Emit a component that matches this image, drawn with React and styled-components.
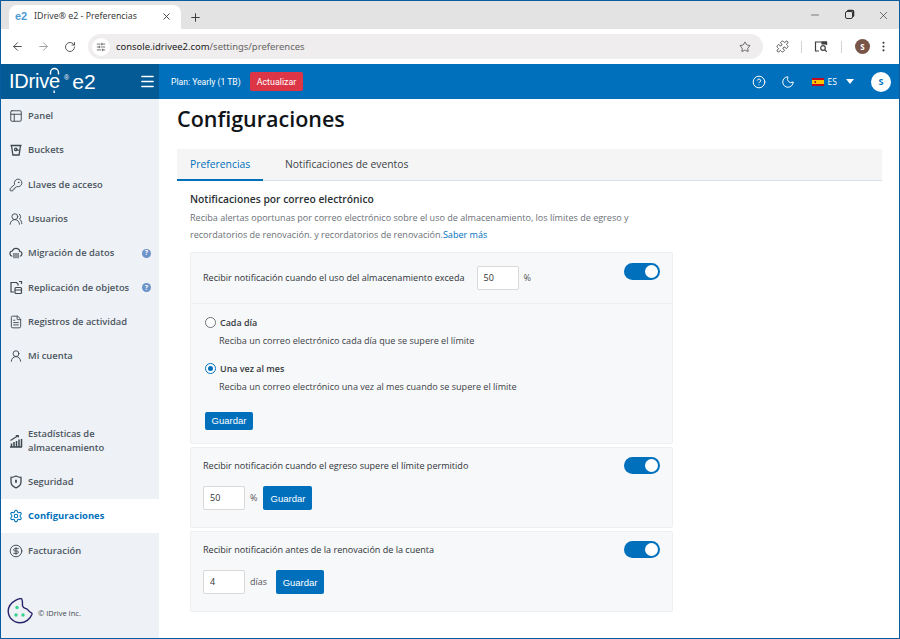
import React from 'react'
import styled, { createGlobalStyle } from 'styled-components'
import {
  ArrowLeft,
  ArrowRight,
  RotateCw,
  Plus,
  X,
  Minus,
  Star,
  Puzzle,
  EllipsisVertical,
  SlidersHorizontal,
  Menu,
  CircleHelp,
  Moon,
  Settings,
  CircleDollarSign,
  KeyRound,
  UsersRound,
  FileText,
  UserRound,
  PanelsTopLeft,
} from 'lucide-react'

const GlobalStyle = createGlobalStyle`
  html, body {
    margin: 0;
    padding: 0;
    background: #fff;
    overflow: hidden;
  }
  * { box-sizing: border-box; }
`

const Frame = styled.div`
  width: 900px;
  height: 639px;
  border: 1px solid #0b5c9e;
  display: flex;
  flex-direction: column;
  overflow: hidden;
  font-family: 'Open Sans', sans-serif;
  background: #fff;
`

const TabStrip = styled.div`
  height: 28px;
  flex: none;
  background: #e3e3e3;
  display: flex;
  align-items: flex-end;
  padding-left: 8px;
`

const BrowserTab = styled.div`
  width: 172px;
  height: 24px;
  background: #fff;
  border-radius: 8px 8px 0 0;
  display: flex;
  align-items: center;
  padding: 0 9px 2px 6px;
  font-family: 'Noto Sans', sans-serif;
  font-size: 8.8px;
  color: #3c3c3c;
`

const Favicon = styled.span`
  font-family: 'Liberation Sans', sans-serif;
  font-size: 11px;
  font-weight: 700;
  color: #4d9ad6;
  width: 19px;
`

const TabTitle = styled.span`
  flex: 1;
  white-space: nowrap;
`

const NewTab = styled.div`
  margin-left: 8px;
  height: 24px;
  display: flex;
  align-items: center;
  color: #3a3a3a;
`

const WindowButtons = styled.div`
  margin-left: auto;
  height: 28px;
  display: flex;
  align-items: center;
  gap: 24px;
  padding-right: 9px;
  color: #333;
`

const RestoreIcon = styled.span`
  width: 8px;
  height: 8px;
  border: 1.2px solid #333;
  border-radius: 2px;
  box-shadow: 1.5px -1.5px 0 -0.2px #333;
`

const Toolbar = styled.div`
  height: 35px;
  flex: none;
  background: #fff;
  display: flex;
  align-items: center;
  padding: 0 7px 0 9px;
  color: #444;
`

const NavGlyph = styled.span`
  width: 14px;
  display: flex;
  justify-content: center;
  margin-right: ${({ $gap }) => $gap}px;
  color: ${({ $muted }) => ($muted ? '#9a9a9a' : '#3f3f3f')};
`

const UrlBar = styled.div`
  width: 675px;
  height: 25px;
  flex: none;
  margin-left: 11px;
  border-radius: 13px;
  background: #efeded;
  display: flex;
  align-items: center;
  padding: 0 12px 0 4px;
`

const SiteChip = styled.span`
  width: 18px;
  height: 18px;
  border-radius: 50%;
  background: #fff;
  display: flex;
  align-items: center;
  justify-content: center;
  color: #333;
  margin-right: 6px;
`

const Url = styled.span`
  flex: 1;
  font-family: 'Noto Sans', sans-serif;
  font-size: 9.45px;
  color: #222;
  & span { color: #666; }
`

const ToolIcons = styled.div`
  flex: 1;
  display: flex;
  align-items: center;
  padding-left: 13px;
  color: #3f3f3f;
`

const Divider = styled.span`
  width: 1px;
  height: 12px;
  background: #d5d5d5;
  margin: 0 ${({ $space }) => $space}px;
`

const ProfileDot = styled.span`
  width: 15px;
  height: 15px;
  border-radius: 50%;
  background: #795548;
  color: #fff;
  font-size: 8px;
  font-weight: 700;
  display: flex;
  align-items: center;
  justify-content: center;
  margin-right: 7px;
`

const AppHeader = styled.header`
  height: 35px;
  flex: none;
  background: #0070bc;
  display: flex;
  align-items: center;
  color: #fff;
`

const LogoBlock = styled.div`
  width: 158px;
  height: 100%;
  background: #045a94;
  display: flex;
  align-items: center;
  padding: 0 3px 0 8px;
`

const LogoText = styled.span`
  font-family: 'Liberation Sans', sans-serif;
  font-size: 20px;
  letter-spacing: -0.2px;
  display: flex;
  align-items: center;
`

const LogoMark = styled.span`
  font-size: 7px;
  margin: -9px 3px 0 4px;
  font-family: 'Liberation Sans', sans-serif;
`

const LogoE2 = styled.span`
  font-family: 'Liberation Sans', sans-serif;
  font-size: 21px;
  flex: 1;
`

const PlanText = styled.span`
  font-family: Roboto, sans-serif;
  font-size: 8.6px;
  margin-left: 12px;
  width: 79px;
  white-space: nowrap;
`

const UpgradeButton = styled.button`
  width: 53px;
  height: 19px;
  border: 0;
  border-radius: 2px;
  background: #dc3545;
  color: #fff;
  font-family: Roboto, sans-serif;
  font-size: 8.9px;
  padding: 0;
`

const HeaderRight = styled.div`
  margin-left: auto;
  display: flex;
  align-items: center;
  padding-right: 8px;
`

const LangText = styled.span`
  font-size: 8.5px;
  margin: 0 9px 0 4px;
`

const Caret = styled.span`
  width: 0;
  height: 0;
  border-left: 4px solid transparent;
  border-right: 4px solid transparent;
  border-top: 5px solid #fff;
  margin-right: 17px;
`

const UserCircle = styled.span`
  width: 20px;
  height: 20px;
  border-radius: 50%;
  background: #fff;
  color: #0070bc;
  font-size: 9px;
  font-weight: 700;
  display: flex;
  align-items: center;
  justify-content: center;
`

const Body = styled.div`
  flex: 1;
  display: flex;
  min-height: 0;
`

const Sidebar = styled.aside`
  width: 158px;
  flex: none;
  background: #eef1f5;
  display: flex;
  flex-direction: column;
`

const NavItem = styled.div`
  display: flex;
  align-items: center;
  flex: none;
  height: ${({ $tall }) => ($tall ? '46px' : '34.3px')};
  margin-top: ${({ $offset }) => $offset || 0}px;
  padding: 0 8px;
  gap: 5px;
  background: ${({ $active }) => ($active ? '#fff' : 'transparent')};
  color: ${({ $active }) => ($active ? '#0070bc' : '#4b5661')};
  font-size: 9.4px;
  font-weight: ${({ $active }) => ($active ? 700 : 600)};
  letter-spacing: ${({ $active }) => ($active ? '0.05px' : '0')};
  line-height: 14px;
`

const NavIcon = styled.span`
  width: 14px;
  height: 14px;
  flex: none;
  display: flex;
  align-items: center;
  justify-content: center;
  color: ${({ $active }) => ($active ? '#0070bc' : '#3e4850')};
`

const NavLabel = styled.span`
  flex: 1;
  white-space: pre-line;
`

const HelpDot = styled.span`
  width: 9px;
  height: 9px;
  flex: none;
  border-radius: 50%;
  background: #6c93c7;
  color: #fff;
  font-size: 7px;
  font-weight: 700;
  display: flex;
  align-items: center;
  justify-content: center;
`

const SideFooter = styled.div`
  margin-top: auto;
  height: 56px;
  display: flex;
  align-items: center;
  padding: 0 0 0 6px;
  gap: 4px;
  font-size: 7.5px;
  color: #3e4850;
  & span { margin-top: 5px; }
`

const Main = styled.main`
  flex: 1;
  padding: 0 17px 0 18px;
  min-width: 0;
`

const Title = styled.h1`
  margin: 5px 0 0;
  height: 45px;
  font-size: 21.5px;
  line-height: 30px;
  font-weight: 600;
  color: #101418;
`

const Tabs = styled.div`
  height: 32px;
  background: #f5f5f5;
  border-bottom: 1px solid #d6e4ef;
  display: flex;
  font-size: 10.35px;
`

const TabItem = styled.div`
  height: 32px;
  display: flex;
  align-items: center;
  padding: 0 13px;
  width: ${({ $width }) => $width}px;
  white-space: nowrap;
  color: ${({ $active }) => ($active ? '#0070bc' : '#3d4348')};
  border-bottom: 2px solid ${({ $active }) => ($active ? '#0070bc' : 'transparent')};
  margin-right: ${({ $space }) => $space || 0}px;
`

const Content = styled.section`
  padding: 11px 0 0 13px;
  width: 496px;
`

const Heading = styled.h2`
  margin: 0;
  font-size: 10.3px;
  line-height: 15px;
  font-weight: 600;
  color: #2a2f34;
`

const Lead = styled.p`
  margin: 2px 0 9px;
  font-size: 9.05px;
  line-height: 17px;
  color: #6b7177;
  white-space: nowrap;
  & a { color: #0070bc; }
`

const Card = styled.div`
  width: 483px;
  background: #f7f8fa;
  border: 1px solid #eeeff1;
  border-radius: 2px;
  margin-bottom: 3px;
  padding: ${({ $padded }) => ($padded ? '9px 12px 0' : '0')};
  height: ${({ $height }) => ($height ? `${$height}px` : 'auto')};
`

const TopRow = styled.div`
  height: 51px;
  display: flex;
  align-items: flex-start;
  padding: 13px 12px 0;
  border-bottom: 1px solid #eceef0;
`

const RowText = styled.span`
  font-size: 9.05px;
  line-height: 24px;
  color: #2f3438;
  white-space: nowrap;
`

const Amount = styled.div`
  width: 42px;
  height: 24px;
  flex: none;
  margin-left: ${({ $left }) => $left || 0}px;
  background: #fff;
  border: 1px solid #d9d9d9;
  border-radius: 2px;
  font-size: 9px;
  line-height: 22px;
  padding-left: 6px;
  color: #333;
`

const Unit = styled.span`
  font-size: 9px;
  color: #555;
  margin: 0 ${({ $right }) => $right}px 0 5px;
  line-height: 24px;
`

const Toggle = styled.span`
  width: 36px;
  height: 17px;
  flex: none;
  margin-left: auto;
  margin-top: ${({ $lift }) => -$lift}px;
  border-radius: 9px;
  background: #0070bc;
  display: flex;
  align-items: center;
  justify-content: flex-end;
  padding-right: 2px;
  &::after {
    content: '';
    width: 13px;
    height: 13px;
    border-radius: 50%;
    background: #fff;
  }
`

const Options = styled.div`
  padding: 11px 14px 14px;
  height: 139px;
`

const OptionLabel = styled.label`
  display: flex;
  align-items: center;
  gap: 4px;
  height: 14px;
  font-size: 8.95px;
  font-weight: 600;
  color: #363b40;
`

const Radio = styled.span`
  width: 11px;
  height: 11px;
  flex: none;
  border-radius: 50%;
  border: 1px solid ${({ $on }) => ($on ? '#0070bc' : '#6d7278')};
  background: #fff;
  display: flex;
  align-items: center;
  justify-content: center;
  &::after {
    content: '';
    width: 5px;
    height: 5px;
    border-radius: 50%;
    background: ${({ $on }) => ($on ? '#0070bc' : 'transparent')};
  }
`

const OptionText = styled.div`
  margin: 5px 0 13px 14px;
  font-size: 9.05px;
  line-height: 14px;
  color: #3c4146;
`

const SaveButton = styled.button`
  border: 0;
  border-radius: 2px;
  background: #0070bc;
  color: #fff;
  font-family: 'Liberation Sans', sans-serif;
  font-size: 9.5px;
  padding: 0;
  width: ${({ $width }) => $width}px;
  height: ${({ $small }) => ($small ? '18px' : '24px')};
`

const HeadRow = styled.div`
  display: flex;
  align-items: center;
  height: 18px;
`

const ValueRow = styled.div`
  display: flex;
  align-items: center;
  margin-top: 11px;
`

const BucketIcon = () => (
  <svg width="14" height="14" viewBox="0 0 14 14" fill="none" stroke="currentColor" strokeWidth="1.3">
    <path d="M1.5 2.5h11M2.5 2.5l1.4 9.5h6.2l1.4-9.5" />
    <path d="M7 6.5l3.5 1" />
    <circle cx="6.8" cy="6.4" r="1.2" />
  </svg>
)

const MigrationIcon = () => (
  <svg width="15" height="14" viewBox="0 0 15 14" fill="none" stroke="currentColor" strokeWidth="1.2">
    <path d="M3.6 10.5C1.8 10.2 1 9 1 7.6c0-1.5 1.1-2.7 2.6-2.7C4.2 3 5.7 2 7.4 2c2.2 0 3.9 1.5 4.1 3.4 1.4.1 2.4 1.2 2.4 2.5 0 1.4-.9 2.4-2.3 2.6" />
    <path d="M5.3 7v5.5M7.5 7v5.5M9.7 7v5.5" />
  </svg>
)

const ReplicateIcon = () => (
  <svg width="14" height="15" viewBox="0 0 14 15" fill="none" stroke="currentColor" strokeWidth="1.2">
    <path d="M5 12H2V2.5h5.5l1.5 1.5v1.5" />
    <rect x="6" y="7.5" width="6.5" height="6" rx="1" />
    <path d="M6 10h6.5M10 1.5h2.5V4" />
  </svg>
)

const ChartIcon = () => (
  <svg width="14" height="14" viewBox="0 0 14 14" fill="none" stroke="currentColor" strokeWidth="1.2">
    <path d="M1 13h12M2.5 13V9.5M5 13V8M7.5 13V7M10 13V5.5M12.5 13V5" strokeWidth="1.5" />
    <path d="M1.5 6.5L8.5 2M6.8 1.5h2.5v2" />
  </svg>
)

const ShieldIcon = () => (
  <svg width="14" height="14" viewBox="0 0 14 14" fill="none" stroke="currentColor" strokeWidth="1.3">
    <path d="M2 2.3C4.5 2.3 5.5 1.8 7 1c1.5.8 2.5 1.3 5 1.3v4.4c0 3-2.2 5-5 6.1-2.8-1.1-5-3.1-5-6.1z" />
    <path d="M7 4.8v3" strokeWidth="1.8" />
  </svg>
)

const CookieLogo = () => (
  <svg width="27" height="27" viewBox="0 0 27 27" fill="none">
    <path
      d="M14 1.5c-2 .2-3.8.7-5.5 1.8C4 5.8 1.2 10 1.2 14c0 6.5 5.3 11.8 11.8 11.8 5.4 0 10.2-3.6 12-8.5.3-.9-.2-1.4-.9-1.7-2.7-1-2.6-2.9-4.4-3.7-2-.9-3.3-.7-4-2.6-.7-1.9.1-3.8-.4-5.6-.2-.9-.6-2.3-1.3-2.2z"
      stroke="#27236b"
      strokeWidth="1.4"
    />
    <circle cx="10" cy="10.5" r="1.7" fill="#35d28f" />
    <circle cx="9" cy="18" r="1.7" fill="#35d28f" />
    <circle cx="16" cy="18" r="1.7" fill="#35d28f" />
  </svg>
)

const SpainFlag = () => (
  <svg width="12" height="8" viewBox="0 0 12 8">
    <rect width="12" height="8" fill="#c60b1e" />
    <rect y="2" width="12" height="4" fill="#ffc400" />
    <rect x="2.5" y="3" width="1.5" height="2" fill="#ad1519" />
  </svg>
)

// the lock shaped "e" of the logo, the letter itself stays text next to it
const LockArc = styled.span`
  position: relative;
  display: inline-block;
  font-size: 20px;
  & svg {
    position: absolute;
    left: -1px;
    top: -5px;
  }
`

const LockShackle = () => (
  <svg width="13" height="31" viewBox="0 0 13 31" fill="none" stroke="#fff" strokeWidth="1.4">
    <path d="M2.5 9.5V7.5C2.5 5.2 4.3 3.5 6.5 3.5S10.5 5.2 10.5 7.5v2" />
    <path d="M6.2 25.5v2.5" />
  </svg>
)

const navItems = [
  { label: 'Panel', icon: <PanelsTopLeft size={14} strokeWidth={1.6} /> },
  { label: 'Buckets', icon: <BucketIcon /> },
  { label: 'Llaves de acceso', icon: <KeyRound size={14} strokeWidth={1.6} /> },
  { label: 'Usuarios', icon: <UsersRound size={14} strokeWidth={1.6} /> },
  { label: 'Migración de datos', icon: <MigrationIcon />, help: true },
  { label: 'Replicación de objetos', icon: <ReplicateIcon />, help: true },
  { label: 'Registros de actividad', icon: <FileText size={14} strokeWidth={1.6} /> },
  { label: 'Mi cuenta', icon: <UserRound size={14} strokeWidth={1.6} /> },
  { label: 'Estadísticas de\nalmacenamiento', icon: <ChartIcon />, tall: true, offset: 45 },
  { label: 'Seguridad', icon: <ShieldIcon /> },
  { label: 'Configuraciones', icon: <Settings size={14} strokeWidth={1.8} />, active: true },
  { label: 'Facturación', icon: <CircleDollarSign size={14} strokeWidth={1.6} />, offset: 1 },
]

export default function App() {
  return (
    <Frame>
      <GlobalStyle />
      <TabStrip>
        <BrowserTab>
          <Favicon>e2</Favicon>
          <TabTitle>IDrive® e2 - Preferencias</TabTitle>
          <X size={11} strokeWidth={2} />
        </BrowserTab>
        <NewTab>
          <Plus size={13} strokeWidth={1.8} />
        </NewTab>
        <WindowButtons>
          <Minus size={12} strokeWidth={1.2} />
          <RestoreIcon />
          <X size={13} strokeWidth={1.2} />
        </WindowButtons>
      </TabStrip>

      <Toolbar>
        <NavGlyph $gap={12}>
          <ArrowLeft size={13} strokeWidth={1.7} />
        </NavGlyph>
        <NavGlyph $gap={13} $muted>
          <ArrowRight size={13} strokeWidth={1.7} />
        </NavGlyph>
        <NavGlyph $gap={0}>
          <RotateCw size={12} strokeWidth={1.7} />
        </NavGlyph>
        <UrlBar>
          <SiteChip>
            <SlidersHorizontal size={10} strokeWidth={1.6} />
          </SiteChip>
          <Url>
            console.idrivee2.com<span>/settings/preferences</span>
          </Url>
          <Star size={12} strokeWidth={1.6} />
        </UrlBar>
        <ToolIcons>
          <Puzzle size={13} strokeWidth={1.6} />
          <Divider $space={12} />
          <svg width="14" height="13" viewBox="0 0 14 13" fill="none" stroke="currentColor" strokeWidth="1.2">
            <path d="M5 11H1.5V2h11v3" />
            <path d="M8 2h4.5v2H8z" fill="currentColor" />
            <circle cx="9" cy="8" r="2.3" />
            <path d="M10.8 9.8l2 2" />
          </svg>
          <Divider $space={13} />
          <ProfileDot>S</ProfileDot>
          <EllipsisVertical size={13} strokeWidth={2} />
        </ToolIcons>
      </Toolbar>

      <AppHeader>
        <LogoBlock>
          <LogoText>
            IDriv
            <LockArc>
              e
              <LockShackle />
            </LockArc>
          </LogoText>
          <LogoMark>®</LogoMark>
          <LogoE2>e2</LogoE2>
          <Menu size={17} strokeWidth={2} />
        </LogoBlock>
        <PlanText>Plan: Yearly (1 TB)</PlanText>
        <UpgradeButton>Actualizar</UpgradeButton>
        <HeaderRight>
          <CircleHelp size={14} strokeWidth={1.7} />
          <Moon size={14} strokeWidth={1.7} style={{ margin: '0 17px 0 15px' }} />
          <SpainFlag />
          <LangText>ES</LangText>
          <Caret />
          <UserCircle>S</UserCircle>
        </HeaderRight>
      </AppHeader>

      <Body>
        <Sidebar>
          {navItems.map(item => (
            <NavItem key={item.label} $active={item.active} $tall={item.tall} $offset={item.offset}>
              <NavIcon $active={item.active}>{item.icon}</NavIcon>
              <NavLabel>{item.label}</NavLabel>
              {item.help && <HelpDot>?</HelpDot>}
            </NavItem>
          ))}
          <SideFooter>
            <CookieLogo />
            <span>© IDrive Inc.</span>
          </SideFooter>
        </Sidebar>

        <Main>
          <Title>Configuraciones</Title>
          <Tabs>
            <TabItem $active $width={86} $space={9}>
              Preferencias
            </TabItem>
            <TabItem>Notificaciones de eventos</TabItem>
          </Tabs>
          <Content>
            <Heading>Notificaciones por correo electrónico</Heading>
            <Lead>
              Reciba alertas oportunas por correo electrónico sobre el uso de almacenamiento, los límites de egreso y
              <br />
              recordatorios de renovación. y recordatorios de renovación.<a>Saber más</a>
            </Lead>

            <Card>
              <TopRow>
                <RowText>Recibir notificación cuando el uso del almacenamiento exceda</RowText>
                <Amount $left={12}>50</Amount>
                <Unit $right={0}>%</Unit>
                <Toggle $lift={3} />
              </TopRow>
              <Options>
                <OptionLabel>
                  <Radio />
                  Cada día
                </OptionLabel>
                <OptionText>Reciba un correo electrónico cada día que se supere el límite</OptionText>
                <OptionLabel>
                  <Radio $on />
                  Una vez al mes
                </OptionLabel>
                <OptionText>Reciba un correo electrónico una vez al mes cuando se supere el límite</OptionText>
                <SaveButton $small $width={48}>
                  Guardar
                </SaveButton>
              </Options>
            </Card>

            <Card $padded $height={81}>
              <HeadRow>
                <RowText>Recibir notificación cuando el egreso supere el límite permitido</RowText>
                <Toggle $lift={1} />
              </HeadRow>
              <ValueRow>
                <Amount>50</Amount>
                <Unit $right={6}>%</Unit>
                <SaveButton $width={49}>Guardar</SaveButton>
              </ValueRow>
            </Card>

            <Card $padded $height={81}>
              <HeadRow>
                <RowText>Recibir notificación antes de la renovación de la cuenta</RowText>
                <Toggle $lift={1} />
              </HeadRow>
              <ValueRow>
                <Amount>4</Amount>
                <Unit $right={9}>días</Unit>
                <SaveButton $width={48}>Guardar</SaveButton>
              </ValueRow>
            </Card>
          </Content>
        </Main>
      </Body>
    </Frame>
  )
}
